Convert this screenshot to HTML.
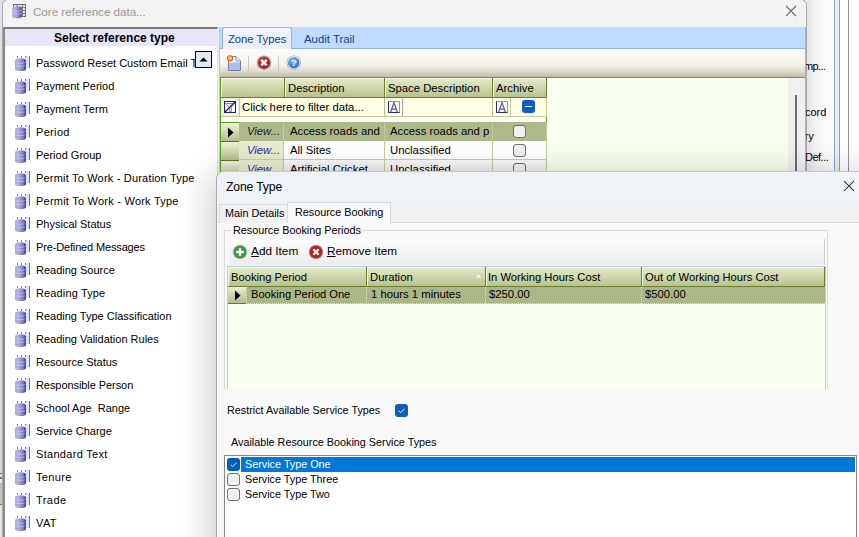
<!DOCTYPE html>
<html><head><meta charset="utf-8">
<style>
*{box-sizing:border-box;margin:0;padding:0}
html,body{width:859px;height:537px;overflow:hidden;background:#fff;font-family:"Liberation Sans",sans-serif;}
.a{position:absolute}
.t{position:absolute;white-space:nowrap;line-height:1;color:#000}
.li{left:36px;font-size:11px}
.gh{height:20px;background:linear-gradient(#e6ecc9,#b7c291);border-right:1px solid #6f7d2e;border-bottom:1px solid #6f7d2e;box-shadow:inset 1px 1px 0 #f4f7e4}
.gt{font-size:11.3px}
.dt{font-size:10.8px}
.vw{font-style:italic;color:#3b1f96}
.rs{width:18px;background:linear-gradient(#eff2da,#b3bd8c);border-bottom:1px solid #5e6e1e}
.cb{width:13px;height:13px;border:1px solid #707070;border-radius:3px;background:#f0f0f0}
</style></head><body>
<svg width="0" height="0" style="position:absolute">
<defs>
<linearGradient id="cyl" x1="0" x2="1" y1="0" y2="0"><stop offset="0" stop-color="#a8a8dc"/><stop offset="0.3" stop-color="#b0b0e4"/><stop offset="0.7" stop-color="#8080c4"/><stop offset="1" stop-color="#4a4a90"/></linearGradient>
<symbol id="dbi" viewBox="0 0 17 17">
<rect x="3" y="1" width="1" height="2" fill="#808080"/><rect x="7" y="1" width="1" height="2" fill="#808080"/><rect x="11" y="1" width="1" height="2" fill="#808080"/>
<rect x="12" y="1" width="3" height="12" fill="#e2e2fa"/><rect x="15" y="1" width="1" height="12" fill="#707070"/>
<path d="M1 5.2Q1 3.2 6.5 3.2Q12 3.2 12 5.2V14Q12 16 6.5 16Q1 16 1 14Z" fill="url(#cyl)"/>
<path d="M1.5 7.6Q6.5 9.2 11.5 7.6M1.5 10.8Q6.5 12.4 11.5 10.8" stroke="#d4d4f4" stroke-width="0.9" fill="none" opacity=".65"/>
<path d="M11 5V14.5" stroke="#3e3e86" stroke-width="1.2" opacity=".5"/>
</symbol>
</defs></svg>
<!-- far left background strip -->
<div class="a" style="left:0;top:0;width:3px;height:537px;background:linear-gradient(#dde3ea,#d2d9e2)"></div>
<div class="a" style="left:0;top:473px;width:3px;height:1px;background:#3a78d0"></div>
<div class="a" style="left:0;top:477px;width:3px;height:2px;background:#7a7a7a"></div>
<div class="a" style="left:0;top:479px;width:3px;height:4px;background:#e8e8e8"></div>
<div class="a" style="left:0;top:483px;width:3px;height:21px;background:#c6c2b4"></div>
<div class="a" style="left:0;top:504px;width:3px;height:1px;background:#4aa030"></div>
<div class="a" style="left:0;top:505px;width:3px;height:32px;background:#e2e6e2"></div>

<!-- main window -->
<div class="a" id="win" style="left:2px;top:-1px;width:805px;height:560px;background:#f3f3f3;border:1px solid #a9a9a9;border-bottom:none;border-radius:6px 6px 0 0"></div>
<svg class="a" style="left:12px;top:4px" width="15" height="15">
 <rect x="1.5" y="0.5" width="12" height="12" fill="#e4e4fa" stroke="#707070"/>
 <path d="M1.5 3.5H13.5M10.5 0.5V12.5M10.5 6.5H13.5M10.5 9.5H13.5M5 0.5V3.5" stroke="#808080" stroke-width="1"/>
 <path d="M0.3 4Q0.3 2.3 5 2.3Q9.8 2.3 9.8 4V12.6Q9.8 14.3 5 14.3Q0.3 14.3 0.3 12.6Z" fill="url(#cyl)"/>
 <path d="M0.8 6.6Q5 8 9.3 6.6M0.8 9.6Q5 11 9.3 9.6" stroke="#d4d4f4" stroke-width="0.9" fill="none" opacity=".6"/>
</svg>
<div class="t" style="left:33px;top:6px;font-size:11.6px;color:#989898">Core reference data...</div>
<svg class="a" style="left:785px;top:5px" width="12" height="12"><path d="M1 1L11 11M11 1L1 11" stroke="#707070" stroke-width="1.1"/></svg>

<!-- left panel -->
<div class="a" style="left:3px;top:27px;width:215px;height:520px;background:#fff;border-top:2px solid #7a7a7a;border-left:2px solid #8a8a8a;border-right:1px solid #dedede"></div>
<div class="a" style="left:5px;top:29px;width:213px;height:17px;background:#e6e6f8"></div>
<div class="t" style="left:54px;top:32px;font-size:12px;font-weight:bold">Select reference type</div>

<svg class="a" style="left:14px;top:55px" width="17" height="17"><use href="#dbi"/></svg>
<div class="t li" style="top:58px;width:159px;overflow:hidden">Password Reset Custom Email Te</div>
<svg class="a" style="left:14px;top:78px" width="17" height="17"><use href="#dbi"/></svg>
<div class="t li" style="top:81px">Payment Period</div>
<svg class="a" style="left:14px;top:101px" width="17" height="17"><use href="#dbi"/></svg>
<div class="t li" style="top:104px;letter-spacing:0.1px">Payment Term</div>
<svg class="a" style="left:14px;top:124px" width="17" height="17"><use href="#dbi"/></svg>
<div class="t li" style="top:127px;letter-spacing:0.33px">Period</div>
<svg class="a" style="left:14px;top:147px" width="17" height="17"><use href="#dbi"/></svg>
<div class="t li" style="top:150px">Period Group</div>
<svg class="a" style="left:14px;top:170px" width="17" height="17"><use href="#dbi"/></svg>
<div class="t li" style="top:173px;letter-spacing:0.19px">Permit To Work - Duration Type</div>
<svg class="a" style="left:14px;top:193px" width="17" height="17"><use href="#dbi"/></svg>
<div class="t li" style="top:196px;letter-spacing:0.23px">Permit To Work - Work Type</div>
<svg class="a" style="left:14px;top:216px" width="17" height="17"><use href="#dbi"/></svg>
<div class="t li" style="top:219px">Physical Status</div>
<svg class="a" style="left:14px;top:239px" width="17" height="17"><use href="#dbi"/></svg>
<div class="t li" style="top:242px;letter-spacing:-0.15px">Pre-Defined Messages</div>
<svg class="a" style="left:14px;top:262px" width="17" height="17"><use href="#dbi"/></svg>
<div class="t li" style="top:265px">Reading Source</div>
<svg class="a" style="left:14px;top:285px" width="17" height="17"><use href="#dbi"/></svg>
<div class="t li" style="top:288px;letter-spacing:0.14px">Reading Type</div>
<svg class="a" style="left:14px;top:308px" width="17" height="17"><use href="#dbi"/></svg>
<div class="t li" style="top:311px">Reading Type Classification</div>
<svg class="a" style="left:14px;top:331px" width="17" height="17"><use href="#dbi"/></svg>
<div class="t li" style="top:334px">Reading Validation Rules</div>
<svg class="a" style="left:14px;top:354px" width="17" height="17"><use href="#dbi"/></svg>
<div class="t li" style="top:357px">Resource Status</div>
<svg class="a" style="left:14px;top:377px" width="17" height="17"><use href="#dbi"/></svg>
<div class="t li" style="top:380px;letter-spacing:-0.07px">Responsible Person</div>
<svg class="a" style="left:14px;top:400px" width="17" height="17"><use href="#dbi"/></svg>
<div class="t li" style="top:403px;letter-spacing:0px">School Age&nbsp; Range</div>
<svg class="a" style="left:14px;top:423px" width="17" height="17"><use href="#dbi"/></svg>
<div class="t li" style="top:426px">Service Charge</div>
<svg class="a" style="left:14px;top:446px" width="17" height="17"><use href="#dbi"/></svg>
<div class="t li" style="top:449px;letter-spacing:0.3px">Standard Text</div>
<svg class="a" style="left:14px;top:469px" width="17" height="17"><use href="#dbi"/></svg>
<div class="t li" style="top:472px;letter-spacing:0.33px">Tenure</div>
<svg class="a" style="left:14px;top:492px" width="17" height="17"><use href="#dbi"/></svg>
<div class="t li" style="top:495px;letter-spacing:0.45px">Trade</div>
<svg class="a" style="left:14px;top:515px" width="17" height="17"><use href="#dbi"/></svg>
<div class="t li" style="top:518px;letter-spacing:0.4px">VAT</div>


<!-- scroll up button -->
<div class="a" style="left:195px;top:51px;width:17px;height:17px;background:#e6e6f8;border:1px solid #000"></div>
<svg class="a" style="left:195px;top:51px" width="17" height="17"><path d="M4.5 10.5L8.5 6.5L12.5 10.5Z" fill="#000"/></svg>

<!-- right area -->
<div class="a" style="left:219px;top:27px;width:587px;height:22px;background:#bfdbff"></div>
<div class="a" style="left:222px;top:27px;width:70px;height:23px;background:linear-gradient(#f2f7fd,#e6eef9 60%,#f4f3ee);border:1px solid #93b6e4;border-bottom:none;border-radius:3px 3px 0 0"></div>
<div class="t" style="left:228px;top:34px;font-size:11.2px;color:#15428b">Zone Types</div>
<div class="t" style="left:304px;top:34px;font-size:11.4px;color:#15428b">Audit Trail</div>

<!-- toolbar -->
<div class="a" style="left:219px;top:48px;width:3px;height:1px;background:#8eb3e4"></div><div class="a" style="left:292px;top:48px;width:514px;height:1px;background:#8eb3e4"></div>
<div class="a" style="left:220px;top:49px;width:585px;height:28px;background:linear-gradient(#fcfbf8 0%,#f5f3ed 55%,#dedbcc 80%,#bfbca7 100%)"></div>
<div class="a" style="left:220px;top:77px;width:585px;height:1px;background:#5ea41e"></div>

<!-- grid area -->
<div class="a" style="left:220px;top:78px;width:568px;height:100px;background:#f8fff0"></div>
<div class="a" style="left:788px;top:78px;width:17px;height:100px;background:#f0f0f0"></div>
<div class="a" style="left:795px;top:95px;width:2px;height:80px;background:#6d6d6d"></div>
<div class="a" style="left:805px;top:27px;width:1px;height:150px;background:#8fb4e8"></div>


<!-- toolbar icons -->
<svg class="a" style="left:226px;top:54px" width="80" height="19">
 <defs><radialGradient id="rg" cx="0.4" cy="0.35" r="0.7"><stop offset="0" stop-color="#e23a3a"/><stop offset="1" stop-color="#a00c0c"/></radialGradient>
 <radialGradient id="bg2" cx="0.4" cy="0.3" r="0.75"><stop offset="0" stop-color="#7ab8f0"/><stop offset="1" stop-color="#2a6cc4"/></radialGradient></defs>
 <path d="M2.5 2.5H10L14.5 7V16.5H2.5Z" fill="#f4f7fc" stroke="#6c80b4"/>
 <path d="M10 2.5V7H14.5" fill="#e0e8f6" stroke="#8a9cc8"/>
 <rect x="3" y="8.5" width="11" height="7.5" fill="#aebfe0"/>
 <circle cx="4" cy="4.3" r="2.6" fill="#f9d23a" stroke="#ea5a2a" stroke-width="1.1"/>
 <rect x="22" y="2" width="1" height="15" fill="#cbcac0"/>
 <circle cx="38" cy="8.7" r="7.3" fill="#a8a8a8"/>
 <circle cx="38" cy="8.7" r="6" fill="url(#rg)"/>
 <path d="M35.2 5.9L40.8 11.5M40.8 5.9L35.2 11.5" stroke="#fff" stroke-width="2.4"/>
 <rect x="52" y="2" width="1" height="15" fill="#cbcac0"/>
 <circle cx="67.8" cy="8.7" r="7.3" fill="#a9aeb8"/>
 <circle cx="67.8" cy="8.7" r="6.6" fill="#eef1f6"/>
 <circle cx="67.8" cy="8.7" r="5.7" fill="url(#bg2)"/>
 <text x="67.8" y="12.4" font-family="Liberation Sans" font-weight="bold" font-size="9.5" fill="#fff" text-anchor="middle">?</text>
</svg>

<!-- main grid header -->
<div class="a gh" style="left:221px;top:78px;width:64px"></div>
<div class="a gh" style="left:285px;top:78px;width:100px"></div>
<div class="a gh" style="left:385px;top:78px;width:108px"></div>
<div class="a gh" style="left:493px;top:78px;width:54px"></div>
<div class="t gt" style="left:288px;top:83px">Description</div>
<div class="t gt" style="left:388px;top:83px">Space Description</div>
<div class="t gt" style="left:496px;top:83px">Archive</div>

<!-- filter row -->
<div class="a" style="left:221px;top:98px;width:326px;height:19px;background:#fffde2;border-bottom:1px solid #c7cb9f"></div>
<div class="a" style="left:221px;top:98px;width:18px;height:18px;background:#e9edcf"></div>
<div class="a" style="left:239px;top:98px;width:1px;height:18px;background:#c9cda3"></div>
<div class="a" style="left:384px;top:98px;width:1px;height:18px;background:#b9be90"></div>
<div class="a" style="left:492px;top:98px;width:1px;height:18px;background:#b9be90"></div>
<svg class="a" style="left:222px;top:98px" width="17" height="18">
 <rect x="0.5" y="1" width="16" height="16.5" rx="4" fill="#fff" stroke="#e8e8e0"/>
 <rect x="2.5" y="3.5" width="11" height="11" fill="#fff" stroke="#24246e" stroke-width="1.1"/>
 <path d="M3.5 5.5H12.5L9.5 9V13.5H7.5V9Z" fill="none" stroke="#8282e0" stroke-width="1"/>
 <path d="M3 14L13 4" stroke="#1e1e66" stroke-width="1.3"/>
</svg>
<div class="t gt" style="left:242px;top:102px">Click here to filter data...</div>
<svg class="a" style="left:387px;top:100px" width="14" height="14"><rect x="1.5" y="1.5" width="11" height="11" fill="#fffde2" stroke="#9090d8"/><path d="M1.5 12.5V1.5M1.5 12.5H12.5" stroke="#2c2c80"/><path d="M3.6 12.2L7 2.6L10.4 12.2M4.8 9H9.2" stroke="#5454d4" fill="none" stroke-width="1.25"/></svg>
<div class="a" style="left:402px;top:98px;width:1px;height:18px;background:#a8a8a8"></div>
<svg class="a" style="left:495px;top:100px" width="14" height="14"><rect x="1.5" y="1.5" width="11" height="11" fill="#fffde2" stroke="#9090d8"/><path d="M1.5 12.5V1.5M1.5 12.5H12.5" stroke="#2c2c80"/><path d="M3.6 12.2L7 2.6L10.4 12.2M4.8 9H9.2" stroke="#5454d4" fill="none" stroke-width="1.25"/></svg>
<div class="a" style="left:510px;top:98px;width:1px;height:18px;background:#c8c8b0"></div>
<div class="a" style="left:522px;top:100px;width:13px;height:13px;background:#0c5fc4;border-radius:3px"></div>
<div class="a" style="left:525px;top:106px;width:7px;height:1px;background:#fff"></div>

<!-- gap row -->
<div class="a" style="left:221px;top:117px;width:325px;height:5px;background:#fdfff7"></div>
<div class="a" style="left:221px;top:122px;width:18px;height:1px;background:#5ea41e"></div>
<div class="a" style="left:546px;top:98px;width:1px;height:19px;background:#c4cb9c"></div>
<div class="a" style="left:546px;top:117px;width:1px;height:5px;background:#5ea41e"></div>

<!-- data rows -->
<div class="a rs" style="left:221px;top:123px;height:19px"></div>
<div class="a rs" style="left:221px;top:142px;height:19px"></div>
<div class="a rs" style="left:221px;top:161px;height:19px"></div>
<svg class="a" style="left:227px;top:127px" width="8" height="11"><path d="M1 0.5L6.5 5.5L1 10.5Z" fill="#000"/></svg>

<div class="a" style="left:239px;top:122px;width:308px;height:19px;background:#adb98b"></div>
<div class="a" style="left:239px;top:141px;width:45px;height:19px;background:#e7ecce;border-bottom:1px solid #c9cfa6"></div>
<div class="a" style="left:284px;top:141px;width:263px;height:19px;background:#fff;border-bottom:1px solid #c9cfa6"></div>
<div class="a" style="left:239px;top:160px;width:45px;height:19px;background:#e7ecce"></div>
<div class="a" style="left:284px;top:160px;width:263px;height:19px;background:linear-gradient(#fafafa,#e4e4e4)"></div>
<div class="a" style="left:283px;top:122px;width:1px;height:57px;background:#c4cb9c"></div>
<div class="a" style="left:384px;top:122px;width:1px;height:57px;background:#c4cb9c"></div>
<div class="a" style="left:492px;top:122px;width:1px;height:57px;background:#c4cb9c"></div>
<div class="a" style="left:546px;top:122px;width:1px;height:57px;background:#c4cb9c"></div>
<div class="t gt vw" style="left:247px;top:126px;color:#222">View...</div>
<div class="t gt vw" style="left:247px;top:145px">View...</div>
<div class="t gt vw" style="left:247px;top:164px">View...</div>
<div class="t gt" style="left:290px;top:126px">Access roads and</div>
<div class="t gt" style="left:390px;top:126px">Access roads and p</div>
<div class="t gt" style="left:290px;top:145px">All Sites</div>
<div class="t gt" style="left:390px;top:145px">Unclassified</div>
<div class="t gt" style="left:290px;top:164px">Artificial Cricket</div>
<div class="t gt" style="left:390px;top:164px">Unclassified</div>
<div class="a cb" style="left:513px;top:125px"></div>
<div class="a cb" style="left:513px;top:144px"></div>
<div class="a cb" style="left:513px;top:163px"></div>

<div class="a" style="left:219px;top:27px;width:1px;height:150px;background:#a9c8f0"></div>
<div class="a" style="left:220px;top:77px;width:1px;height:100px;background:#5ca41c"></div>
<!-- right strip -->
<div class="a" style="left:807px;top:0;width:52px;height:172px;background:#fff"></div>
<div class="a" style="left:807px;top:0;width:27px;height:172px;background:linear-gradient(90deg,#e4e4e4,#f4f4f4 35%,#fbfbfb 70%,#fdfdfd)"></div>
<div class="a" style="left:834px;top:0;width:1px;height:172px;background:#7ea8e6"></div>
<div class="a" style="left:835px;top:0;width:4px;height:172px;background:#eeeeee"></div>
<div class="a" style="left:839px;top:0;width:1px;height:172px;background:#9b9b9b"></div>
<div class="a" style="left:848px;top:0;width:1px;height:172px;background:#8a93a2"></div>
<div class="a" style="left:806px;top:0;width:28px;height:172px;overflow:hidden">
 <div class="t" style="left:-2px;top:61px;font-size:11px;letter-spacing:-0.6px">mp...</div>
 <div class="t" style="left:-1px;top:107px;font-size:11px">cord</div>
 <div class="t" style="left:-1.5px;top:131px;font-size:11px">ry</div>
 <div class="t" style="left:-1px;top:152px;font-size:11px;letter-spacing:-0.5px">Def...</div>
</div>

<!-- dialog -->
<div class="a" style="left:216px;top:171px;width:700px;height:500px;border-radius:8px 0 0 0;box-shadow:-3px 6px 34px 4px rgba(0,0,0,0.19)"></div>
<div class="a" style="left:216px;top:171px;width:660px;height:400px;background:#f0f0f0;border:1px solid #a9a9a9;border-top-color:#c9c9c9;border-radius:8px 0 0 0"></div>

<div class="a" style="left:217px;top:172px;width:650px;height:30px;background:#eff2f6;border-radius:7px 0 0 0"></div>
<div class="t" style="left:226px;top:180.5px;font-size:12.2px;letter-spacing:-0.15px">Zone Type</div>
<svg class="a" style="left:843px;top:180px" width="12" height="12"><path d="M1 1L11 11M11 1L1 11" stroke="#1a1a1a" stroke-width="1.05"/></svg>


<!-- dialog tabs -->
<div class="a" style="left:217px;top:222px;width:650px;height:320px;background:#f9f9f9;border-top:1px solid #dadada"></div>
<div class="a" style="left:219px;top:204px;width:69px;height:19px;background:#f0f0f0;border:1px solid #dadada;border-bottom:none"></div>
<div class="a" style="left:287px;top:202px;width:104px;height:21px;background:#f9f9f9;border:1px solid #dadada;border-bottom:none"></div>
<div class="t dt" style="left:225px;top:208px">Main Details</div>
<div class="t dt" style="left:295px;top:207px">Resource Booking</div>

<!-- group box -->
<div class="a" style="left:224px;top:230px;width:604px;height:320px;border:1px solid #dcdcdc;border-bottom:none"></div>
<div class="a" style="left:231px;top:226px;width:130px;height:10px;background:#f9f9f9"></div>
<div class="t dt" style="left:233px;top:225px">Resource Booking Periods</div>

<!-- toolbar -->
<div class="a" style="left:229px;top:239px;width:596px;height:26px;background:linear-gradient(#fdfdfd,#ececec);border-right:1px solid #d0d0d0"></div>
<svg class="a" style="left:231px;top:244px" width="18" height="16"><circle cx="9" cy="8" r="7.3" fill="#a9b3a9"/><circle cx="9" cy="8" r="6.2" fill="#3b9a3b"/><path d="M9 4.2V11.8M5.2 8H12.8" stroke="#fff" stroke-width="2.4"/></svg>
<div class="t" style="left:251px;top:246px;font-size:11.8px"><u style="text-decoration-thickness:1px;text-underline-offset:1px">A</u>dd Item</div>
<svg class="a" style="left:307px;top:244px" width="18" height="16"><circle cx="9" cy="8" r="7.3" fill="#a0a0a0"/><circle cx="9" cy="8" r="6.2" fill="#c21c1c"/><path d="M6.3 5.3L11.7 10.7M11.7 5.3L6.3 10.7" stroke="#fff" stroke-width="2.2"/></svg>
<div class="t" style="left:327px;top:246px;font-size:11.8px"><u style="text-decoration-thickness:1px;text-underline-offset:1px">R</u>emove Item</div>

<!-- dialog grid -->
<div class="a" style="left:227px;top:266px;width:599px;height:123px;background:#f8fff0;border:1px solid #b6cde4;border-bottom:none"></div>
<div class="a gh" style="left:228px;top:267px;width:139px"></div>
<div class="a gh" style="left:367px;top:267px;width:119px"></div>
<div class="a gh" style="left:486px;top:267px;width:156px"></div>
<div class="a gh" style="left:642px;top:267px;width:183px"></div>
<div class="t gt" style="left:231px;top:272px;font-size:11.2px">Booking Period</div>
<div class="t gt" style="left:370px;top:272px">Duration</div>
<div class="t gt" style="left:488px;top:272px;font-size:11.2px">In Working Hours Cost</div>
<div class="t gt" style="left:645px;top:272px;font-size:11.2px">Out of Working Hours Cost</div>
<svg class="a" style="left:474px;top:272px" width="9" height="7"><path d="M0.8 6.2L4.5 0.8L8.2 6.2Z" fill="#f2f4e4" stroke="#c9d0b0" stroke-width="1"/></svg>
<div class="a" style="left:228px;top:287px;width:597px;height:17px;background:#abb787;border-bottom:1px dotted #dfe4c8"></div>
<div class="a" style="left:228px;top:287px;width:18px;height:17px;background:linear-gradient(#eaeecf,#b3bd8d);border-bottom:1px solid #6b7a2a"></div>
<svg class="a" style="left:234px;top:290px" width="8" height="11"><path d="M1 0.5L6.5 5.5L1 10.5Z" fill="#000"/></svg>
<div class="a" style="left:246px;top:287px;width:1px;height:17px;border-left:1px dotted #e8ecd8"></div>
<div class="a" style="left:366px;top:287px;width:1px;height:17px;border-left:1px dotted #dde2c6"></div>
<div class="a" style="left:485px;top:287px;width:1px;height:17px;border-left:1px dotted #dde2c6"></div>
<div class="a" style="left:641px;top:287px;width:1px;height:17px;border-left:1px dotted #dde2c6"></div>
<div class="t gt" style="left:251px;top:289px;font-size:11.1px">Booking Period One</div>
<div class="t gt" style="left:371px;top:289px">1 hours 1 minutes</div>
<div class="t gt" style="left:489px;top:289px">$250.00</div>
<div class="t gt" style="left:645px;top:289px">$500.00</div>

<!-- restrict -->
<div class="a" style="left:217px;top:389px;width:650px;height:160px;background:#f9f9f9"></div>
<div class="t dt" style="left:227px;top:405px">Restrict Available Service Types</div>
<div class="a" style="left:395px;top:404px;width:13px;height:13px;background:#0f5fba;border-radius:3px"></div>
<svg class="a" style="left:395px;top:404px" width="13" height="13"><path d="M3.5 6.6L5.6 8.7L9.6 4.6" stroke="#e8f0ff" fill="none" stroke-width="0.9"/></svg>
<div class="t dt" style="left:231px;top:437px">Available Resource Booking Service Types</div>

<!-- listbox -->
<div class="a" style="left:224px;top:455px;width:633px;height:100px;background:#fff;border:1px solid #858585"></div>
<div class="a" style="left:241px;top:457px;width:614px;height:15px;background:#0078d7"></div>
<div class="a" style="left:227px;top:458px;width:13px;height:13px;background:#005fb8;border-radius:3px"></div>
<svg class="a" style="left:227px;top:458px" width="13" height="13"><path d="M3.5 6.6L5.6 8.7L9.6 4.6" stroke="#e8f0ff" fill="none" stroke-width="0.9"/></svg>
<div class="a cb" style="left:227px;top:473px"></div>
<div class="a cb" style="left:227px;top:488px"></div>
<div class="t dt" style="left:245px;top:459px;color:#fff">Service Type One</div>
<div class="t dt" style="left:245px;top:474px">Service Type Three</div>
<div class="t dt" style="left:245px;top:489px">Service Type Two</div>

</body></html>
